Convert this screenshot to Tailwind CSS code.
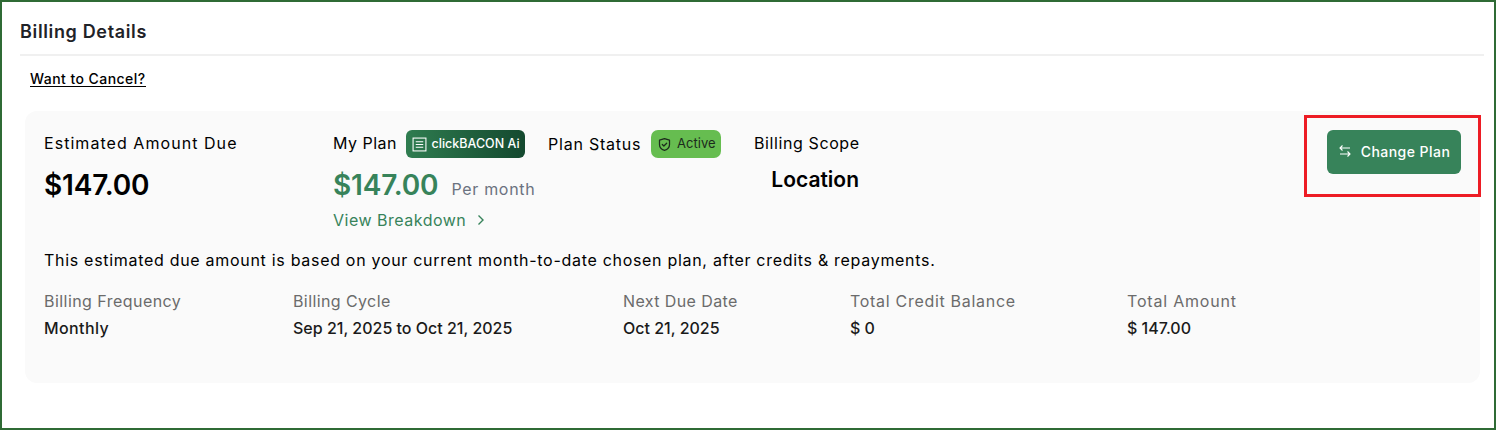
<!DOCTYPE html>
<html lang="en">
<head>
  <meta charset="UTF-8" />
  <title>Billing Details</title>
  <script src="https://cdn.jsdelivr.net/npm/@tailwindcss/browser@4"></script>
</head>
<body class="bg-white font-['Inter',sans-serif]">
  <div class="relative h-[430px] w-[1496px] border-2 border-[#2f6b35] bg-white pl-[18px] pr-[10px]">
    <!-- Header -->
    <div class="flex h-[54px] items-end border-b-2 border-[#f0f0f0] pb-[10px]">
      <h1 class="text-[18px] leading-[24px] font-semibold tracking-[0.65px] text-[#1f2328]">Billing Details</h1>
    </div>
    <div class="h-[55px] pl-[10px] pt-[15px]">
      <a href="#" class="block w-fit border-b border-black text-[14px] leading-[15px] font-medium tracking-[0.45px] text-black">Want to Cancel?</a>
    </div>

    <!-- Card -->
    <div class="ml-[5px] mr-[4px] h-[272px] rounded-[12px] bg-[#fafafa] px-[19px]">
      <div class="flex h-[139px]">
        <div class="w-[289px] pt-[22px]">
          <div class="text-[16px] leading-[20px] tracking-[1.05px] text-black">Estimated Amount Due</div>
          <div class="mt-[15px] text-[28px] leading-[34px] font-semibold tracking-[-0.15px] text-black">$147.00</div>
        </div>
        <div class="w-[215px] pt-[19px]">
          <div class="flex items-center gap-[9px]">
            <span class="mt-[-2px] text-[16px] leading-[20px] tracking-[0.5px] text-black">My Plan</span>
            <span class="flex h-[28px] w-[119px] items-center justify-center gap-[5px] rounded-[6px] bg-gradient-to-r from-[#2f7d50] to-[#14492f] text-[12.500px] font-medium text-white">
              <svg class="h-[15px] w-[15px]" viewBox="0 0 14 14" fill="none" stroke="currentColor" stroke-width="1"><rect x="1" y="1" width="12" height="12"/><path d="M3.500 4.500h7M3.500 7h7M3.500 9.500h7"/></svg>
              clickBACON Ai
            </span>
          </div>
          <div class="mt-[10px] flex items-baseline gap-[13px]">
            <span class="text-[28px] leading-[34px] font-semibold tracking-[-0.15px] text-[#37835a]">$147.00</span>
            <span class="text-[16px] tracking-[0.7px] text-[#6b7280]">Per month</span>
          </div>
          <div class="mt-[8px] flex items-center gap-[9px] text-[16px] leading-[20px] tracking-[0.5px] text-[#37835a]">
            View Breakdown
            <svg class="h-[12px] w-[12px]" viewBox="0 0 12 12" fill="none" stroke="currentColor" stroke-width="1.400"><path d="M3.500 1.500 8 6l-4.500 4.500"/></svg>
          </div>
        </div>
        <div class="w-[206px] pt-[19px]">
          <div class="flex items-center gap-[10px]">
            <span class="text-[16px] leading-[20px] tracking-[0.78px] text-black">Plan Status</span>
            <span class="flex h-[28px] w-[70px] items-center justify-center gap-[5px] rounded-[7px] bg-[#66bd50] text-[13px] text-[#1c2b1c]">
              <svg class="h-[15px] w-[15px]" viewBox="0 0 24 24" fill="none" stroke="currentColor" stroke-width="2" stroke-linecap="round" stroke-linejoin="round"><path d="M12 2.500 20 5v7c0 5-3.500 8-8 9.500C7.500 20 4 17 4 12V5z"/><path d="m8.500 12 2.500 2.500 4.500-4.500"/></svg>
              Active
            </span>
          </div>
        </div>
        <div class="w-[105px] pt-[22px] text-right">
          <div class="whitespace-nowrap text-[16px] leading-[20px] tracking-[0.6px] text-black">Billing Scope</div>
          <div class="mt-[14px] text-[21px] leading-[26px] font-semibold text-black">Location</div>
        </div>
        <div class="ml-auto pt-[19px]">
          <button class="flex h-[44px] w-[134px] items-center justify-center gap-[9px] rounded-[6px] bg-[#37835a] pb-[2px] text-[14px] font-medium tracking-[0.45px] text-white">
            <svg class="h-[14px] w-[14px]" viewBox="0 0 14 14" fill="none" stroke="currentColor" stroke-width="1.100"><path d="M12 4H2m2.500-2.500L2 4l2.500 2.500M2 10h10M9.500 7.500 12 10l-2.500 2.500"/></svg>
            Change Plan
          </button>
        </div>
      </div>

      <p class="whitespace-nowrap text-[16px] leading-[20px] tracking-[0.7px] text-black">This estimated due amount is based on your current month-to-date chosen plan, after credits &amp; repayments.</p>

      <div class="mt-[20px] grid grid-cols-[249px_330px_227px_277px_1fr]">
        <div><div class="text-[16px] leading-[22px] tracking-[0.45px] text-[#6b6b6b]">Billing Frequency</div><div class="mt-[5px] text-[16px] leading-[22px] font-medium tracking-[0.4px] text-[#1a1a1a]">Monthly</div></div>
        <div><div class="text-[16px] leading-[22px] tracking-[0.4px] text-[#6b6b6b]">Billing Cycle</div><div class="mt-[5px] text-[16px] leading-[22px] font-medium text-[#1a1a1a]">Sep 21, 2025 to Oct 21, 2025</div></div>
        <div><div class="text-[16px] leading-[22px] tracking-[0.4px] text-[#6b6b6b]">Next Due Date</div><div class="mt-[5px] text-[16px] leading-[22px] font-medium text-[#1a1a1a]">Oct 21, 2025</div></div>
        <div><div class="text-[16px] leading-[22px] tracking-[0.7px] text-[#6b6b6b]">Total Credit Balance</div><div class="mt-[5px] text-[16px] leading-[22px] font-medium text-[#1a1a1a]">$ 0</div></div>
        <div><div class="text-[16px] leading-[22px] tracking-[0.8px] text-[#6b6b6b]">Total Amount</div><div class="mt-[5px] text-[16px] leading-[22px] font-medium text-[#1a1a1a]">$ 147.00</div></div>
      </div>
    </div>

    <!-- Annotation -->
    <div class="absolute left-[1302px] top-[113px] h-[82px] w-[177px] border-[3px] border-[#ed1c24]"></div>
  </div>
</body>
</html>
